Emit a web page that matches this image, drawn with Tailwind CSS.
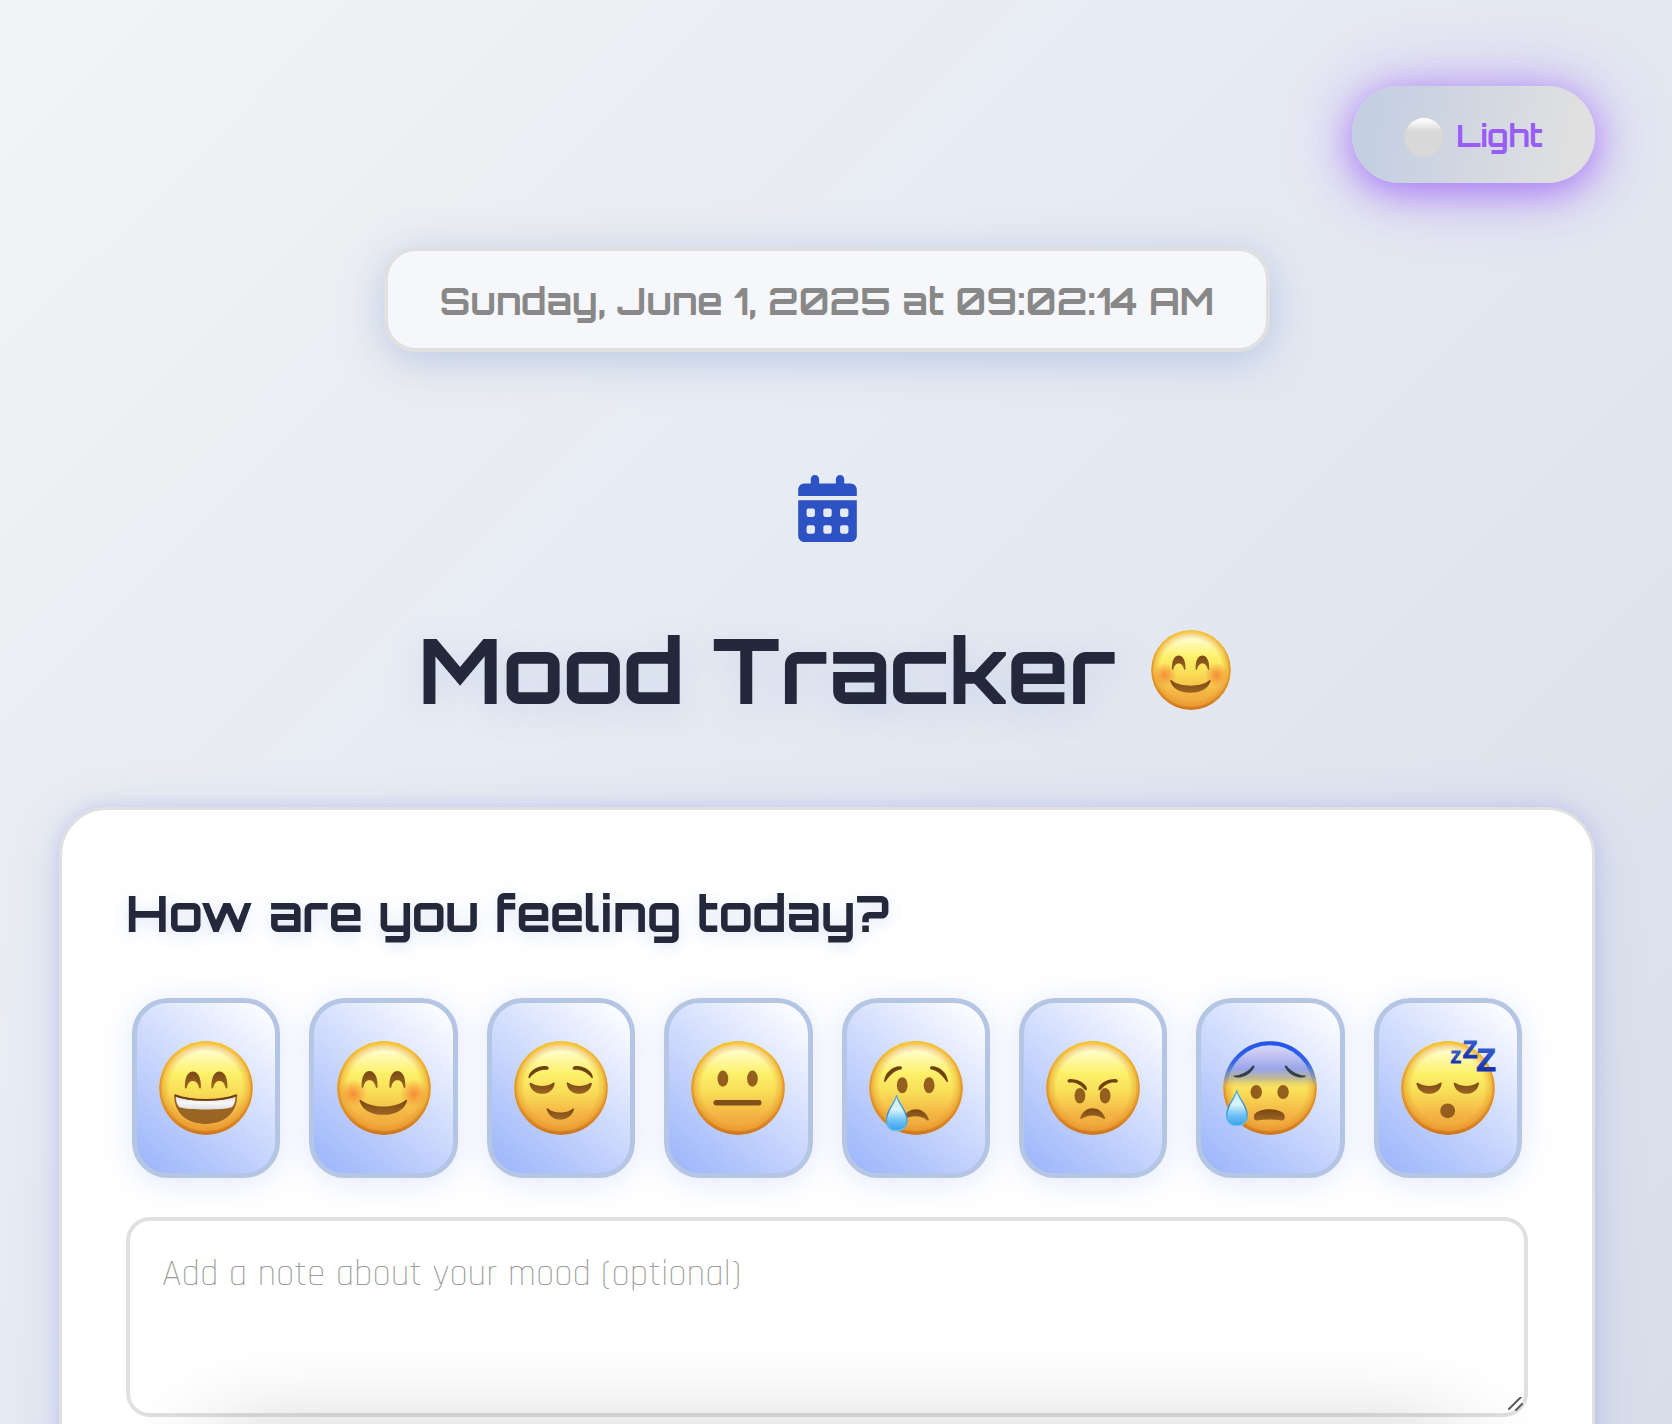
<!DOCTYPE html>
<html lang="en">
<head>
<meta charset="utf-8">
<meta name="viewport" content="width=device-width, initial-scale=1">
<title>Mood Tracker</title>
<script src="https://cdn.jsdelivr.net/npm/@tailwindcss/browser@4"></script>
</head>
<body class="h-screen overflow-hidden bg-[linear-gradient(135deg,#f3f4f8_0%,#eaedf1_26%,#e8ecf4_36%,#e0e5ef_68%,#d8ddea_100%)] font-['Orbitron','DejaVu_Sans',sans-serif] text-[#24283b]">

<!-- Shared emoji artwork -->
<svg class="absolute size-0" aria-hidden="true">
  <defs>
    <linearGradient id="skin" x1="0" y1="0" x2="0" y2="1">
      <stop offset="0" stop-color="#fffce0"/><stop offset=".12" stop-color="#fffcc4"/><stop offset=".34" stop-color="#fdf16a"/><stop offset=".55" stop-color="#f9dc57"/><stop offset=".78" stop-color="#f4b544"/><stop offset="1" stop-color="#ee9f38"/>
    </linearGradient>
    <radialGradient id="rim">
      <stop offset=".78" stop-color="#d98420" stop-opacity="0"/><stop offset=".92" stop-color="#e28e20" stop-opacity=".4"/><stop offset="1" stop-color="#d67a1c" stop-opacity=".9"/>
    </radialGradient>
    <linearGradient id="lip" x1="0" y1="0" x2="0" y2="1">
      <stop offset="0" stop-color="#fdd530" stop-opacity=".7"/><stop offset=".3" stop-color="#fdc72a" stop-opacity=".3"/><stop offset=".5" stop-color="#f5a030" stop-opacity="0"/><stop offset="1" stop-color="#b85c14" stop-opacity=".4"/>
    </linearGradient>
    <radialGradient id="cheek"><stop offset="0" stop-color="#f5782e" stop-opacity=".8"/><stop offset="1" stop-color="#f5782e" stop-opacity="0"/></radialGradient>
    <linearGradient id="brown" x1="0" y1="0" x2="0" y2="1"><stop offset="0" stop-color="#7a4812"/><stop offset="1" stop-color="#9c6624"/></linearGradient>
    <linearGradient id="teeth" x1="0" y1="0" x2="0" y2="1"><stop offset="0" stop-color="#d9dadc"/><stop offset=".5" stop-color="#f8f8fa"/><stop offset="1" stop-color="#dcdde0"/></linearGradient>
    <linearGradient id="drop" x1="0" y1="0" x2="0" y2="1"><stop offset="0" stop-color="#c4ecfb"/><stop offset=".4" stop-color="#d9f5ff"/><stop offset=".7" stop-color="#72c3f6"/><stop offset="1" stop-color="#3c9cec"/></linearGradient>
    <linearGradient id="dropEdge" x1="0" y1="0" x2="0" y2="1"><stop offset="0" stop-color="#5cb8e0"/><stop offset=".5" stop-color="#3088d8"/><stop offset="1" stop-color="#5fcaf0"/></linearGradient>
    <linearGradient id="chill" x1="0" y1="0" x2="0" y2="1"><stop offset="0" stop-color="#e2e0fb"/><stop offset=".14" stop-color="#c5c5f2"/><stop offset=".3" stop-color="#98a4e8"/><stop offset=".4" stop-color="#b0ac9e" stop-opacity=".8"/><stop offset=".5" stop-color="#e8cc60" stop-opacity="0"/></linearGradient>
    <linearGradient id="chillEdge" x1="0" y1="0" x2="0" y2="1"><stop offset="0" stop-color="#2254f4"/><stop offset=".22" stop-color="#3468e8"/><stop offset=".48" stop-color="#5888a0" stop-opacity="0"/></linearGradient>
    <linearGradient id="zed" x1="0" y1="0" x2="0" y2="1"><stop offset="0" stop-color="#3c68d0"/><stop offset="1" stop-color="#1024a8"/></linearGradient>
    <linearGradient id="pearl" x1="0" y1="0" x2="0" y2="1"><stop offset="0" stop-color="#ffffff"/><stop offset=".12" stop-color="#f4f4f4"/><stop offset=".36" stop-color="#d8d8d8"/><stop offset="1" stop-color="#d9d9d9"/></linearGradient>

    <g id="face"><circle cx="140" cy="140" r="139" fill="url(#skin)"/><circle cx="140" cy="140" r="139" fill="url(#rim)"/><circle cx="140" cy="140" r="134" fill="none" stroke="url(#lip)" stroke-width="10"/></g>
    <path id="arch" d="M0 46C0 12 12 0 24 0S48 12 48 46C48 52 43 52 42 47C39 33 32 28 24 28S9 33 6 47C5 52 0 52 0 46Z" fill="url(#brown)"/>
    <path id="lid" d="M46 127C46 123 50 124 53 126C70 137 98 137 114 126C118 123 122 123 121 127C118 147 101 157 84 157S50 147 46 127Z" fill="url(#brown)"/>
    <path id="tear" d="M82 161C86 187 113 205 113 236C113 256 100 267 82 267S52 256 52 236C52 205 78 187 82 161Z" fill="url(#drop)" stroke="url(#dropEdge)" stroke-width="4"/>

    <symbol id="grin" viewBox="0 0 280 280"><use href="#face"/><use href="#arch" x="77" y="91"/><use href="#arch" x="156" y="91"/>
      <path d="M45 161C45 157 49 158 53 160C95 178 183 178 225 160C229 158 233 157 233 161C233 215 195 247 139 247S45 215 45 161Z" fill="#9a6522"/>
      <path d="M50 165C85 182 193 182 228 165C228 180 223 191 217 197C190 206 88 206 61 197C55 191 50 180 50 165Z" fill="url(#teeth)"/>
      <path d="M47 162C95 180 183 180 231 162" fill="none" stroke="#6b3d0e" stroke-width="5"/></symbol>
    <symbol id="blush" viewBox="0 0 280 280"><use href="#face"/><circle cx="48" cy="157" r="42" fill="url(#cheek)"/><circle cx="230" cy="157" r="42" fill="url(#cheek)"/>
      <use href="#arch" x="73" y="89"/><use href="#arch" x="156" y="89"/>
      <path d="M67 178C67 174 71 175 74 178C105 201 172 201 202 178C205 175 209 174 209 178C201 206 175 220 138 220S75 206 67 178Z" fill="url(#brown)"/></symbol>
    <symbol id="relieved" viewBox="0 0 280 280"><use href="#face"/>
      <g id="calm"><path d="M43 109C44 88 76 70 100 76C105 79 104 85 100 86C78 85 62 92 47 110C45 112 43 111 43 109Z" fill="#6f4311"/><use href="#lid"/></g>
      <use href="#calm" transform="translate(278) scale(-1 1)"/>
      <path d="M97 203C97 199 101 201 104 203C122 216 156 216 172 203C176 200 180 200 179 204C172 224 156 234 138 234S104 224 97 203Z" fill="url(#brown)"/></symbol>
    <symbol id="neutral" viewBox="0 0 280 280"><use href="#face"/><ellipse cx="95" cy="112" rx="16" ry="24" fill="#935e1e"/><ellipse cx="183" cy="112" rx="16" ry="24" fill="#935e1e"/><rect x="67" y="176" width="143" height="16" rx="8" fill="#80501a"/></symbol>
    <symbol id="cry" viewBox="0 0 280 280"><use href="#face"/>
      <path id="worry" d="M45 119C47 94 72 73 94 75C100 77 99 84 94 85C76 88 62 102 50 120C48 124 44 123 45 119Z" fill="#6f4311"/><use href="#worry" transform="translate(280) scale(-1 1)"/>
      <ellipse cx="99" cy="132" rx="16" ry="24" fill="#935e1e"/><ellipse cx="179" cy="132" rx="16" ry="24" fill="#935e1e"/>
      <path d="M100 233C115 194 163 194 178 232C179 237 176 238 172 235C155 221 122 221 107 234C103 238 99 237 100 233Z" fill="url(#brown)"/><use href="#tear"/></symbol>
    <symbol id="angry" viewBox="0 0 280 280"><use href="#face"/>
      <ellipse cx="101" cy="163" rx="16" ry="23" fill="#935e1e"/><ellipse cx="176" cy="163" rx="16" ry="23" fill="#935e1e"/>
      <path id="scowl" d="M64 119C65 112 76 113 86 115C106 119 120 131 122 142C122 148 118 148 114 144C101 130 90 123 72 124C67 124 64 123 64 119Z" fill="#6f4311"/><use href="#scowl" transform="translate(278) scale(-1 1)"/>
      <path d="M102 229C114 191 163 191 176 229C177 233 173 233 170 231C152 219 126 219 108 231C105 233 101 233 102 229Z" fill="url(#brown)"/></symbol>
    <symbol id="anxious" viewBox="0 0 280 280"><use href="#face"/><circle cx="140" cy="140" r="139" fill="url(#chill)"/><circle cx="140" cy="140" r="133" fill="none" stroke="url(#chillEdge)" stroke-width="12"/>
      <path id="fret" d="M31 103C50 103 76 91 87 75C92 70 96 75 93 79C84 97 62 110 42 109C34 108 30 106 31 103Z" fill="#33424a"/><use href="#fret" transform="translate(278) scale(-1 1)"/>
      <ellipse cx="99" cy="152" rx="17" ry="21" fill="#935e1e"/><ellipse cx="179" cy="152" rx="17" ry="21" fill="#935e1e"/>
      <path d="M92 226C92 196 184 196 184 226C184 239 176 237 170 236C150 233 126 233 106 236C98 238 92 238 92 226Z" fill="url(#brown)"/><use href="#tear" x="-41" y="-15"/></symbol>
    <symbol id="sleepy" viewBox="0 0 280 280"><use href="#face"/><use href="#lid"/><use href="#lid" x="111"/><circle cx="139" cy="208" r="22" fill="#935e1e"/></symbol>
  </defs>
</svg>

<main class="flex flex-col pt-[86px] pr-[77px] pl-[59px]">
  <button type="button" class="flex h-[97px] w-[243px] items-center justify-center gap-3 self-end rounded-[48px] bg-[linear-gradient(100deg,#c4cfe2_10%,#e0e0e0_90%)] pt-1 text-[31px] font-bold text-[#9a5cf8] shadow-[0_8px_40px_rgba(154,92,248,0.8),0_0_80px_rgba(154,92,248,0.3)]">
    <svg class="size-10" viewBox="0 0 40 40" aria-hidden="true"><circle cx="20" cy="20" r="20" fill="#d5d5d4"/><circle cx="20" cy="20" r="19" fill="url(#pearl)"/></svg>
    Light
  </button>

  <time datetime="2025-06-01T09:02:14" class="mt-16 flex h-[105px] items-center self-center rounded-[32px] border-4 border-[#e0e0e0] bg-[#f6f7fb] px-[52px] pt-1 text-[37px] font-bold whitespace-nowrap text-[#888] shadow-[0_8px_40px_rgba(140,165,215,0.5)]">Sunday, June 1, 2025 at 09:02:14 AM</time>

  <svg class="mt-[123px] h-[67px] w-[59px] self-center" viewBox="0 0 448 512" fill="#2d52c4" aria-hidden="true">
    <path fill-rule="evenodd" d="M128 0c17.700 0 32 14.300 32 32v32h128V32c0-17.700 14.300-32 32-32s32 14.300 32 32v32h48c26.500 0 48 21.500 48 48v48H0v-48c0-26.500 21.500-48 48-48h48V32c0-17.700 14.300-32 32-32zM0 192h448v272c0 26.500-21.500 48-48 48H48c-26.500 0-48-21.500-48-48V192zm64 80v32c0 8.800 7.200 16 16 16h32c8.800 0 16-7.200 16-16v-32c0-8.800-7.200-16-16-16H80c-8.800 0-16 7.200-16 16zm128 0v32c0 8.800 7.200 16 16 16h32c8.800 0 16-7.200 16-16v-32c0-8.800-7.200-16-16-16h-32c-8.800 0-16 7.200-16 16zm144-16c-8.800 0-16 7.200-16 16v32c0 8.800 7.200 16 16 16h32c8.800 0 16-7.200 16-16v-32c0-8.800-7.200-16-16-16h-32zM64 400v32c0 8.800 7.200 16 16 16h32c8.800 0 16-7.200 16-16v-32c0-8.800-7.200-16-16-16H80c-8.800 0-16 7.200-16 16zm144-16c-8.800 0-16 7.200-16 16v32c0 8.800 7.200 16 16 16h32c8.800 0 16-7.200 16-16v-32c0-8.800-7.200-16-16-16h-32zm112 16v32c0 8.800 7.200 16 16 16h32c8.800 0 16-7.200 16-16v-32c0-8.800-7.200-16-16-16h-32c-8.800 0-16 7.200-16 16z"/>
  </svg>

  <h1 class="mt-[72px] flex h-28 items-center gap-9 self-center pr-1 text-[90px] leading-none font-bold whitespace-nowrap [text-shadow:0_8px_32px_rgba(140,165,215,0.25)]">Mood Tracker
    <svg class="size-20" role="img" aria-label="Smiling face"><use href="#blush"/></svg>
  </h1>

  <section class="mt-[81px] rounded-[48px] border-3 border-[#e0e0e0] bg-white px-16 pt-[67px] pb-16 shadow-[0_8px_48px_rgba(140,165,215,0.3),0_0_16px_rgba(170,150,250,0.35)]">
    <h2 class="text-[50px] leading-[72px] font-bold [text-shadow:0_4px_16px_rgba(140,165,215,0.3)]">How are you feeling today?</h2>
    <div class="mt-[49px] grid grid-cols-8 gap-[29px] px-[6px]">
      <button type="button" aria-label="Happy" class="flex h-[180px] items-center justify-center rounded-[36px] border-5 border-[#b5c5e4] bg-[linear-gradient(40deg,#9cb5fb_5%,#ffffff_95%)] bg-origin-border shadow-[0_4px_32px_rgba(140,165,235,0.25)]"><svg class="size-[94px]"><use href="#grin"/></svg></button>
      <button type="button" aria-label="Content" class="flex h-[180px] items-center justify-center rounded-[36px] border-5 border-[#b5c5e4] bg-[linear-gradient(40deg,#9cb5fb_5%,#ffffff_95%)] bg-origin-border shadow-[0_4px_32px_rgba(140,165,235,0.25)]"><svg class="size-[94px]"><use href="#blush"/></svg></button>
      <button type="button" aria-label="Relieved" class="flex h-[180px] items-center justify-center rounded-[36px] border-5 border-[#b5c5e4] bg-[linear-gradient(40deg,#9cb5fb_5%,#ffffff_95%)] bg-origin-border shadow-[0_4px_32px_rgba(140,165,235,0.25)]"><svg class="size-[94px]"><use href="#relieved"/></svg></button>
      <button type="button" aria-label="Neutral" class="flex h-[180px] items-center justify-center rounded-[36px] border-5 border-[#b5c5e4] bg-[linear-gradient(40deg,#9cb5fb_5%,#ffffff_95%)] bg-origin-border shadow-[0_4px_32px_rgba(140,165,235,0.25)]"><svg class="size-[94px]"><use href="#neutral"/></svg></button>
      <button type="button" aria-label="Sad" class="flex h-[180px] items-center justify-center rounded-[36px] border-5 border-[#b5c5e4] bg-[linear-gradient(40deg,#9cb5fb_5%,#ffffff_95%)] bg-origin-border shadow-[0_4px_32px_rgba(140,165,235,0.25)]"><svg class="size-[94px]"><use href="#cry"/></svg></button>
      <button type="button" aria-label="Angry" class="flex h-[180px] items-center justify-center rounded-[36px] border-5 border-[#b5c5e4] bg-[linear-gradient(40deg,#9cb5fb_5%,#ffffff_95%)] bg-origin-border shadow-[0_4px_32px_rgba(140,165,235,0.25)]"><svg class="size-[94px]"><use href="#angry"/></svg></button>
      <button type="button" aria-label="Anxious" class="flex h-[180px] items-center justify-center rounded-[36px] border-5 border-[#b5c5e4] bg-[linear-gradient(40deg,#9cb5fb_5%,#ffffff_95%)] bg-origin-border shadow-[0_4px_32px_rgba(140,165,235,0.25)]"><svg class="size-[94px]"><use href="#anxious"/></svg></button>
      <button type="button" aria-label="Tired" class="flex h-[180px] items-center justify-center rounded-[36px] border-5 border-[#b5c5e4] bg-[linear-gradient(40deg,#9cb5fb_5%,#ffffff_95%)] bg-origin-border shadow-[0_4px_32px_rgba(140,165,235,0.25)]">
        <svg class="size-[94px] overflow-visible" viewBox="0 0 280 280"><use href="#sleepy" width="280" height="280"/>
          <g class="font-['Liberation_Sans',Arial,sans-serif] font-bold" fill="url(#zed)" stroke="url(#zed)" stroke-width="3"><text x="148" y="66" font-size="50">Z</text><text x="184" y="50" font-size="72">Z</text><text x="224" y="89" font-size="96">Z</text></g></svg>
      </button>
    </div>
    <div class="relative mt-[39px]">
      <textarea aria-label="Mood note" placeholder="Add a note about your mood (optional)" class="block h-[200px] w-full resize-none rounded-3xl border-4 border-[#e0e0e0] bg-white px-8 py-[30px] font-['Rajdhani','Roboto',sans-serif] text-[37px] leading-[48px] font-light placeholder:text-[#9c9c9c]"></textarea>
      <svg class="pointer-events-none absolute right-1 bottom-1 size-4" viewBox="0 0 16 16" fill="none" stroke="#5c5c5c" stroke-width="2" stroke-linecap="round" aria-hidden="true"><path d="M1 12 13 0M8 13l6-6"/></svg>
    </div>
  </section>
</main>

<!-- Bottom sheet resting below the fold; only its shadow shows -->
<div class="pointer-events-none fixed inset-x-[12%] top-full mt-3 h-24 rounded-[48px] bg-white shadow-[0_0_96px_rgba(0,0,0,0.22)]"></div>
</body>
</html>
